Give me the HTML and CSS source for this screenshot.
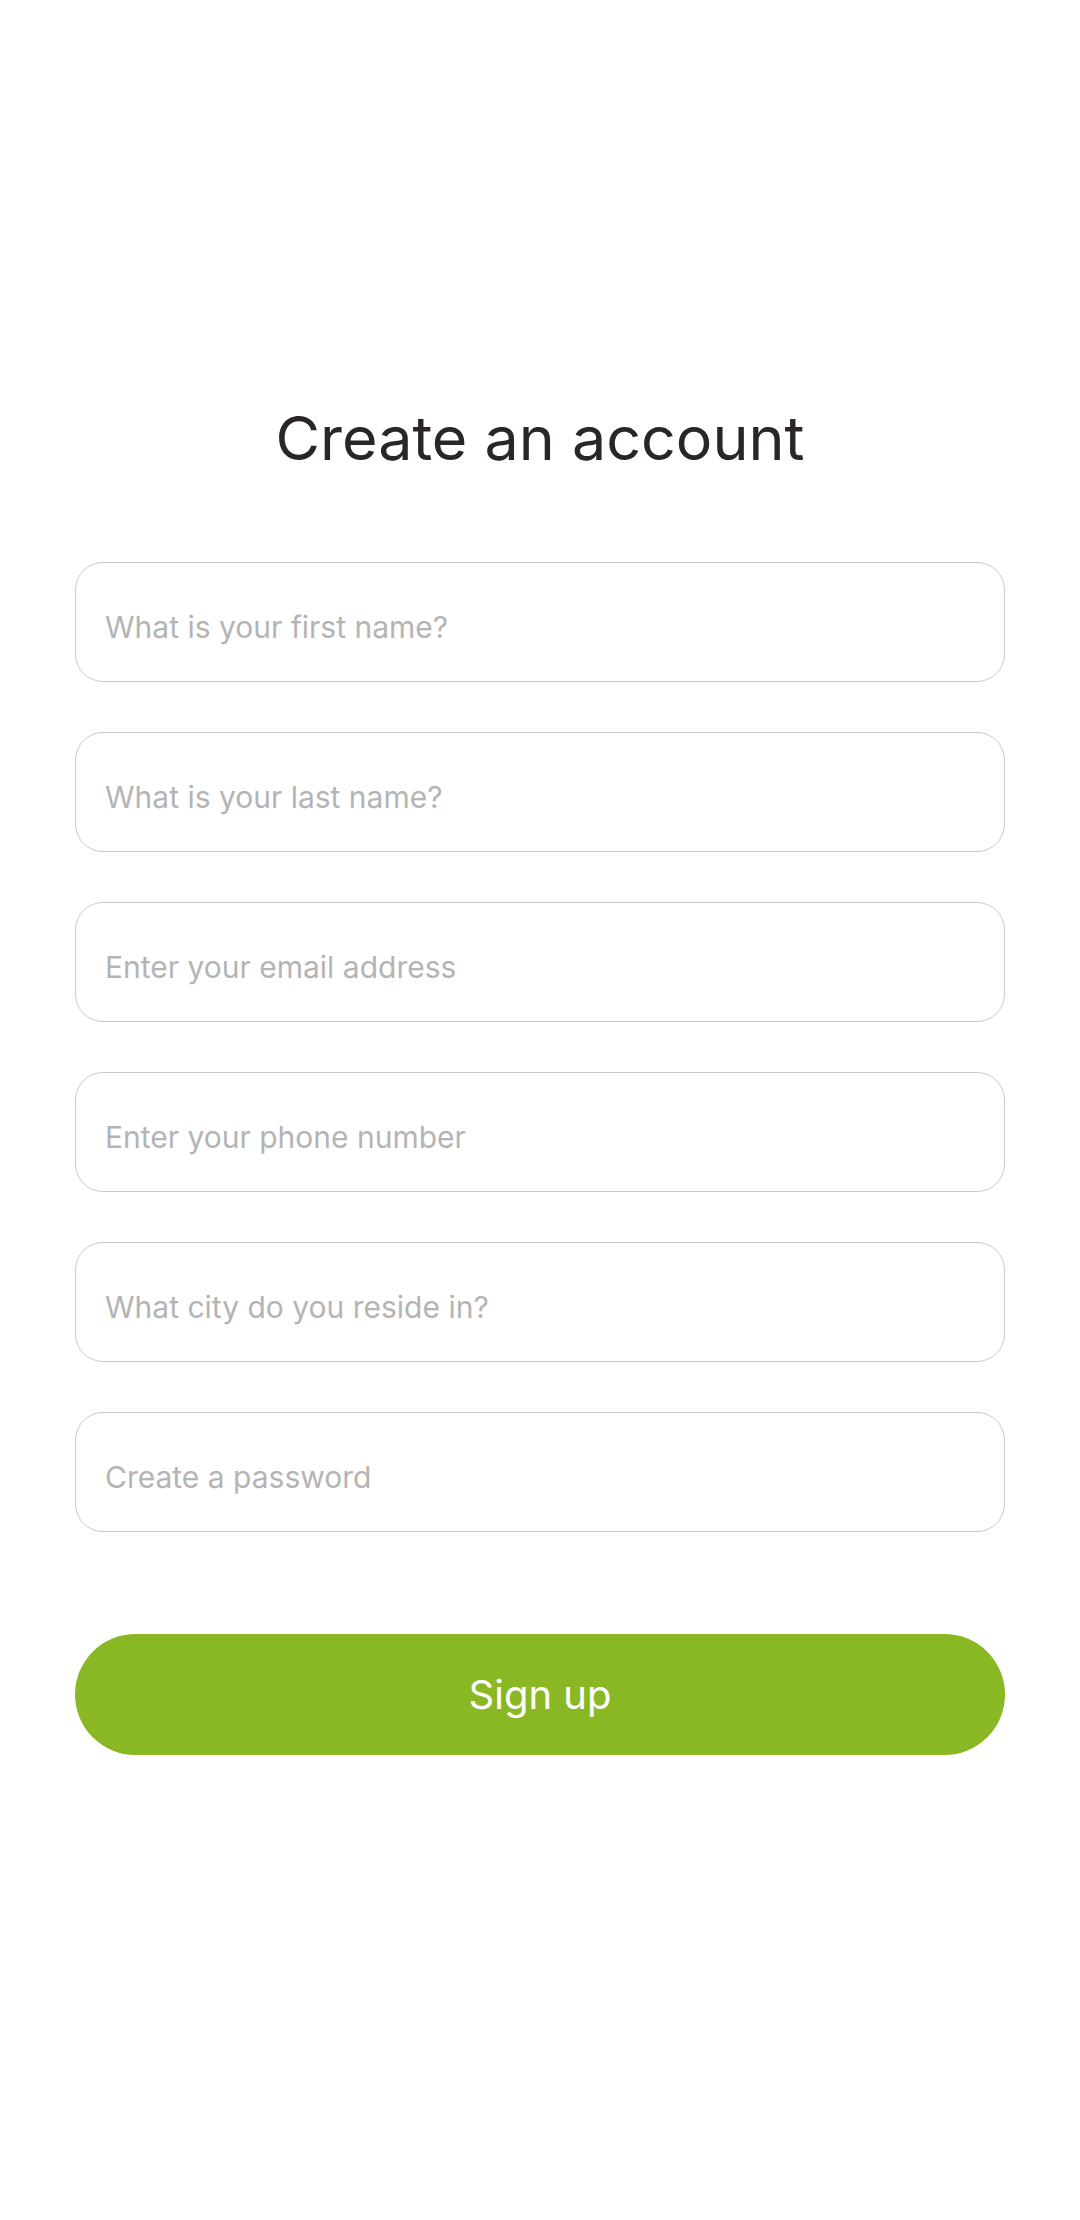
FILE: index.html
```html
<!DOCTYPE html>
<html lang="en">
<head>
<meta charset="utf-8">
<title>Create an account</title>
<link rel="stylesheet" href="styles.css">
</head>
<body>
<main class="page">
  <h1 class="title">Create an account</h1>
  <form class="form">
    <input class="field" type="text" placeholder="What is your first name?">
    <input class="field" type="text" placeholder="What is your last name?">
    <input class="field" type="email" placeholder="Enter your email address">
    <input class="field" type="tel" placeholder="Enter your phone number">
    <input class="field" type="text" placeholder="What city do you reside in?">
    <input class="field" type="password" placeholder="Create a password">
    <button class="submit" type="button">Sign up</button>
  </form>
</main>
</body>
</html>
```

FILE: styles.css
```css
html, body {
  margin: 0;
  padding: 0;
  background: #ffffff;
}
body {
  font-family: Inter, "Noto Sans", "Liberation Sans", sans-serif;
  width: 1080px;
  height: 2220px;
}
.page {
  padding: 400px 75px 0 75px;
  display: flex;
  flex-direction: column;
}
.title {
  margin: 0;
  font-size: 61px;
  line-height: 76px;
  font-weight: 400;
  color: #2b2626;
  text-align: center;
  letter-spacing: 0;
}
.form {
  margin-top: 86px;
  display: flex;
  flex-direction: column;
  gap: 50px;
}
.field {
  box-sizing: border-box;
  height: 120px;
  width: 100%;
  border: 1.5px solid #c9c9c9;
  border-radius: 28px;
  padding: 10px 28px 0 29px;
  font-family: inherit;
  font-size: 30px;
  color: #333;
  background: #fff;
  outline: none;
}
.field::placeholder {
  color: #b4b4b4;
  opacity: 1;
}
.submit {
  margin-top: 52px;
  height: 121px;
  width: 100%;
  border: none;
  border-radius: 61px;
  background: #8ab825;
  color: #ffffff;
  font-family: inherit;
  font-size: 40px;
  font-weight: 400;
  padding: 0;
}
```
